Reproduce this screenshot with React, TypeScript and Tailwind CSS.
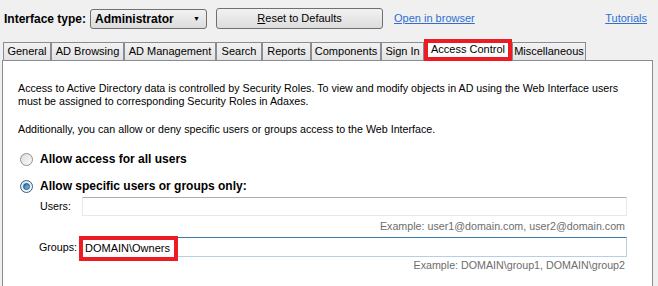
import { useState } from "react";

const tabs = [
  { label: "General", w: "w-[48px]" },
  { label: "AD Browsing", w: "w-[73px]" },
  { label: "AD Management", w: "w-[92px]" },
  { label: "Search", w: "w-[46px]" },
  { label: "Reports", w: "w-[49px]" },
  { label: "Components", w: "w-[70px]" },
  { label: "Sign In", w: "w-[43px]" },
  { label: "Access Control", w: "w-[88px]", active: true },
  { label: "Miscellaneous", w: "w-[74px]" },
];

function Radio({ checked }: { checked?: boolean }) {
  return (
    <div
      className={
        "w-[13px] h-[13px] rounded-full border flex items-center justify-center bg-gradient-to-br from-[#dcdcdc] to-[#fbfbfb] " +
        (checked ? "border-[#2c628b]" : "border-[#8e8f8f]")
      }
    >
      {checked && (
        <div className="w-[7px] h-[7px] rounded-full bg-gradient-to-br from-[#1f6bb0] to-[#7fc2ee] border border-[#18548a]" />
      )}
    </div>
  );
}

export default function App() {
  const [mode, setMode] = useState("specific");
  return (
    <div className="w-[658px] h-[286px] overflow-hidden bg-[#f0f0f0] font-['Liberation_Sans',Arial,sans-serif] text-[10.7px] text-black">
      {/* top bar */}
      <div className="flex items-center h-[21px] mt-[8px] pl-[4px] pr-[11px]">
        <span className="text-[12px] font-bold">Interface type:</span>
        <div className="ml-[4px] w-[117px] h-[20px] rounded-[3px] border border-[#707070] bg-gradient-to-b from-[#f2f2f2] to-[#dcdcdc] flex items-center pl-[4px] pr-[6px]">
          <span className="text-[12px] font-bold">Administrator</span>
          <span className="ml-auto text-[7px] leading-none">▼</span>
        </div>
        <button className="ml-[9px] w-[167px] h-[21px] rounded-[3px] border border-[#707070] bg-gradient-to-b from-[#f2f2f2] to-[#dddddd] text-[11px]">
          <span className="underline">R</span>eset to Defaults
        </button>
        <a className="ml-[11px] text-[11px] text-[#2f6fd0] underline cursor-pointer">Open in browser</a>
        <a className="ml-auto text-[11px] text-[#2f6fd0] underline cursor-pointer">Tutorials</a>
      </div>

      {/* tabs */}
      <div className="flex items-end h-[21px] mt-[10px] pl-[3px] text-[11px]">
        {tabs.map((t) =>
          t.active ? (
            <div
              key={t.label}
              className={t.w + " h-[22px] -mb-px relative z-10 border-4 border-[#ed1c24] bg-white flex items-center justify-center leading-none pb-[2px]"}
            >
              {t.label}
            </div>
          ) : (
            <div
              key={t.label}
              className={t.w + " h-[18px] border border-b-0 border-[#898c95] bg-gradient-to-b from-[#f2f2f2] to-[#e3e3e3] flex items-center justify-center leading-none"}
            >
              {t.label}
            </div>
          )
        )}
      </div>

      {/* panel */}
      <div className="ml-[2px] w-[651px] h-[240px] border border-[#898c95] bg-white pl-[15px] pt-[21px]">
        <p className="leading-[13px]">
          Access to Active Directory data is controlled by Security Roles. To view and modify objects in AD using the Web Interface users
          <br />
          must be assigned to corresponding Security Roles in Adaxes.
        </p>
        <p className="leading-[13px] mt-[15px]">
          Additionally, you can allow or deny specific users or groups access to the Web Interface.
        </p>

        <div
          className="flex items-center h-[16px] mt-[15px] pl-[2px] cursor-pointer"
          onClick={() => setMode("all")}
        >
          <Radio checked={mode === "all"} />
          <span className="ml-[7px] text-[12px] font-bold">Allow access for all users</span>
        </div>
        <div
          className="flex items-center h-[16px] mt-[11px] pl-[2px] cursor-pointer"
          onClick={() => setMode("specific")}
        >
          <Radio checked={mode === "specific"} />
          <span className="ml-[7px] text-[12px] font-bold">Allow specific users or groups only:</span>
        </div>

        <div className="pl-[22px] w-[609px]">
          <div className="flex items-center mt-[3px]">
            <span className="w-[42px]">Users:</span>
            <div className="flex-1 h-[19px] border border-[#e3e9ef] border-t-[#abadb3] bg-white" />
          </div>
          <div className="text-right pr-[2px] leading-[13px] mt-[4px] text-[#6d6d6d]">
            Example: user1@domain.com, user2@domain.com
          </div>
          <div className="flex items-center mt-[4px]">
            <span className="w-[42px] -ml-px">Groups:</span>
            <div className="relative flex-1 h-[20px] border border-[#b5cfe7] border-t-[#3d7bad] bg-white ml-px">
              <div className="absolute -left-[4px] -top-[2px] h-[25px] border-4 border-[#ed1c24] bg-white flex items-center pl-[2px] pr-[4px] text-[11px]">
                DOMAIN\Owners
              </div>
            </div>
          </div>
          <div className="text-right pr-[2px] leading-[13px] mt-[2px] text-[#6d6d6d]">
            Example: DOMAIN\group1, DOMAIN\group2
          </div>
        </div>
      </div>
    </div>
  );
}
